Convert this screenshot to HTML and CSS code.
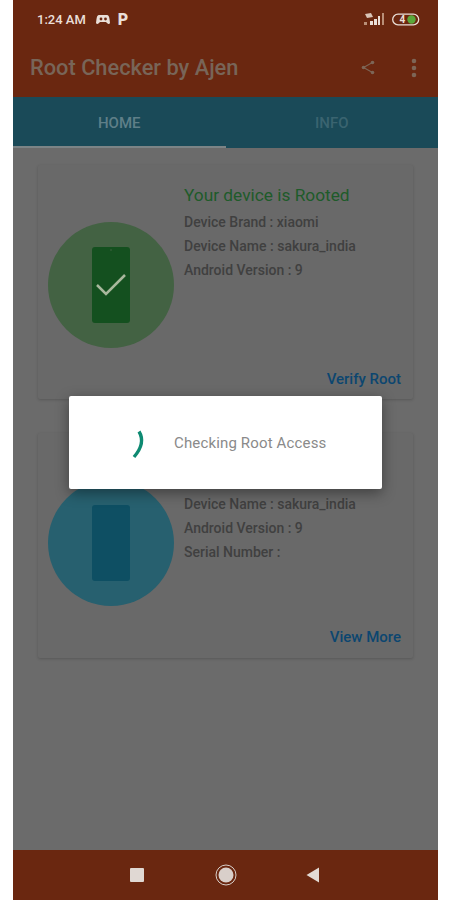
FILE: index.html
```html
<!DOCTYPE html>
<html lang="en">
<head>
    <meta charset="UTF-8">
    <meta name="viewport" content="width=device-width, initial-scale=1.0">
    <title>Root Checker by Ajen</title>
    <link rel="stylesheet" href="styles.css">
</head>
<body>
    <div class="app">
        <!-- Status bar -->
        <div class="status-bar">
            <span class="status-time">1:24 AM</span>
            <svg class="status-game" width="14" height="11" viewBox="0 0 14 11">
                <path d="M3 1 H11 Q13 1 13.5 5 L14 9 Q13 11 11 9 L10 8 H4 L3 9 Q1 11 0 9 L.5 5 Q1 1 3 1Z" fill="#eadfd8"/>
                <circle cx="5" cy="5" r="1.4" fill="#6a2710"/>
                <circle cx="9.5" cy="5" r="1.4" fill="#6a2710"/>
            </svg>
            <span class="status-p">P</span>
            <span class="status-right">
                <svg width="22" height="14" viewBox="0 0 22 14">
                    <path d="M1 2 L7 1 L9 5 L3 6Z" fill="#d9c4b6"/>
                    <rect x="0" y="10" width="3" height="3" fill="#b98f78"/>
                    <rect x="6" y="9" width="3" height="4" fill="#eadfd8"/>
                    <rect x="10" y="7" width="3" height="6" fill="#eadfd8"/>
                    <rect x="14" y="4" width="2" height="9" fill="#eadfd8"/>
                    <rect x="18" y="1" width="2" height="12" fill="#b98f78"/>
                </svg>
                <svg width="28" height="13" viewBox="0 0 28 13">
                    <rect x=".7" y="1.2" width="26" height="10.6" rx="5.3" fill="none" stroke="#eadfd8" stroke-width="1.3"/>
                    <text x="7.5" y="10" font-family="Roboto, sans-serif" font-size="10" font-weight="700" fill="#eadfd8">4</text>
                    <circle cx="19.5" cy="6.5" r="4.2" fill="#5aa83a"/>
                </svg>
            </span>
        </div>

        <!-- Toolbar -->
        <div class="toolbar">
            <span class="toolbar-title">Root Checker by Ajen</span>
            <svg class="icon-share" width="14" height="15" viewBox="0 0 14 15">
                <path d="M11.5 2.5 L2.5 7.5 L11.5 12.5" fill="none" stroke="#7d6556" stroke-width="1.1"/>
                <circle cx="11.5" cy="2.5" r="1.8" fill="#7d6556"/>
                <circle cx="2.5" cy="7.5" r="1.8" fill="#7d6556"/>
                <circle cx="11.5" cy="12.5" r="1.8" fill="#7d6556"/>
            </svg>
            <svg class="icon-menu" width="6" height="20" viewBox="0 0 6 20">
                <circle cx="3" cy="3" r="2.3" fill="#7d6556"/>
                <circle cx="3" cy="10" r="2.3" fill="#7d6556"/>
                <circle cx="3" cy="17" r="2.3" fill="#7d6556"/>
            </svg>
        </div>

        <!-- Tabs -->
        <div class="tabs">
            <div class="tab tab-active">HOME</div>
            <div class="tab">INFO</div>
        </div>

        <!-- Content -->
        <div class="content">
            <div class="card card-root">
                <div class="card-body">
                    <div class="circle circle-green">
                        <svg width="38" height="76" viewBox="0 0 38 76">
                            <rect width="38" height="76" rx="3" fill="#14501f"/>
                            <circle cx="19" cy="3" r=".8" fill="#436243"/>
                            <path d="M5 38 L14 47 L33 28" fill="none" stroke="#a9b89d" stroke-width="2.5"/>
                        </svg>
                    </div>
                    <div class="info">
                        <div class="info-title">Your device is Rooted</div>
                        <p>Device Brand : xiaomi</p>
                        <p>Device Name : sakura_india</p>
                        <p>Android Version : 9</p>
                    </div>
                </div>
                <a class="card-action">Verify Root</a>
            </div>

            <div class="card card-device">
                <div class="card-body">
                    <div class="circle circle-blue">
                        <svg width="38" height="76" viewBox="0 0 38 76">
                            <rect width="38" height="76" rx="3" fill="#0e4f63"/>
                        </svg>
                    </div>
                    <div class="info">
                        <p>Device Name : sakura_india</p>
                        <p>Android Version : 9</p>
                        <p>Serial Number :</p>
                    </div>
                </div>
                <a class="card-action">View More</a>
            </div>
        </div>

        <!-- Navigation bar -->
        <div class="nav-bar">
            <span class="nav-square"></span>
            <svg class="nav-home" width="22" height="22" viewBox="0 0 22 22">
                <circle cx="11" cy="11" r="10" fill="none" stroke="#d9cfca" stroke-width="1"/>
                <circle cx="11" cy="11" r="7.5" fill="#d9cfca"/>
            </svg>
            <svg width="14" height="16" viewBox="0 0 14 16">
                <path d="M13 .5 V15.5 L.5 8Z" fill="#e3dad5"/>
            </svg>
        </div>

        <!-- Dialog -->
        <div class="dialog">
            <svg class="spinner" width="36" height="36" viewBox="0 0 36 36">
                <path d="M19 6.5 Q26 18 14 32" fill="none" stroke="#0e8a72" stroke-width="3.4"/>
            </svg>
            <span class="dialog-text">Checking Root Access</span>
        </div>
    </div>
</body>
</html>
```

FILE: styles.css
```css
body {
    margin: 0;
    background-color: #ffffff;
    font-family: Roboto, Arial, sans-serif;
}
.app {
    position: relative;
    display: flex;
    flex-direction: column;
    width: 425px;
    height: 900px;
    margin-left: 13px;
    overflow: hidden;
    background-color: #6b6b6b;
}
.status-bar {
    display: flex;
    align-items: center;
    height: 38px;
    padding: 0 18px 0 24px;
    background-color: #6a2710;
    color: #eadfd8;
}
.status-time {
    font-size: 13px;
    font-weight: 500;
}
.status-game {
    margin-left: 10px;
}
.status-p {
    margin-left: 8px;
    font-size: 16px;
    font-weight: 900;
}
.status-right {
    display: flex;
    align-items: center;
    gap: 6px;
    margin-left: auto;
}
.toolbar {
    display: flex;
    align-items: center;
    height: 59px;
    padding: 0 21px 0 17px;
    background-color: #6a2710;
}
.toolbar-title {
    flex: 1;
    color: #786558;
    font-size: 21.8px;
    font-weight: 500;
}
.icon-menu {
    margin-left: 36px;
}
.tabs {
    display: flex;
    height: 51px;
    background-color: #1a4a58;
}
.tab {
    flex: 1;
    box-sizing: border-box;
    padding-top: 17px;
    text-align: center;
    color: #3a6470;
    font-size: 15px;
    font-weight: 500;
}
.tab-active {
    border-bottom: 2px solid #7c8486;
    color: #5f7f88;
}
.content {
    flex: 1;
    padding: 17px 25px 0;
}
.card {
    display: flex;
    flex-direction: column;
    box-sizing: border-box;
    padding: 0 12px 10px 10px;
    background-color: #696969;
    border-radius: 2px;
    box-shadow: 0 1px 3px rgba(0, 0, 0, 0.18);
}
.card-root {
    height: 234px;
    margin-bottom: 34px;
}
.card-device {
    height: 225px;
    padding-bottom: 11px;
}
.card-body {
    display: flex;
    gap: 10px;
}
.circle {
    display: flex;
    align-items: center;
    justify-content: center;
    flex-shrink: 0;
    width: 126px;
    height: 126px;
    border-radius: 50%;
}
.circle-green {
    margin-top: 57px;
    background-color: #436243;
}
.circle-blue {
    margin-top: 47px;
    background-color: #27606f;
}
.info {
    padding-top: 19px;
}
.card-device .info {
    padding-top: 59px;
}
.info-title {
    margin-bottom: 4px;
    color: #1e5b2a;
    font-size: 17.3px;
    line-height: 22px;
}
.info p {
    margin: 0;
    color: #404040;
    font-size: 14px;
    font-weight: 500;
    line-height: 24px;
}
.card-action {
    margin-top: auto;
    text-align: right;
    color: #0c4670;
    font-size: 15px;
    font-weight: 500;
    line-height: 20px;
}
.nav-bar {
    display: flex;
    align-items: center;
    justify-content: center;
    gap: 69px;
    height: 50px;
    padding-right: 1px;
    background-color: #6a2710;
}
.nav-square {
    width: 14px;
    height: 14px;
    background-color: #e0d8d3;
    border-radius: 1px;
}
.nav-home {
    margin-left: 2px;
}
.dialog {
    position: absolute;
    top: 396px;
    left: 56px;
    display: flex;
    align-items: center;
    width: 313px;
    height: 93px;
    background-color: #ffffff;
    border-radius: 2px;
    box-shadow: 0 4px 14px rgba(0, 0, 0, 0.4);
}
.spinner {
    margin-left: 51px;
}
.dialog-text {
    margin-left: 18px;
    color: #8a8a8a;
    font-size: 15px;
    letter-spacing: 0.15px;
}
```
